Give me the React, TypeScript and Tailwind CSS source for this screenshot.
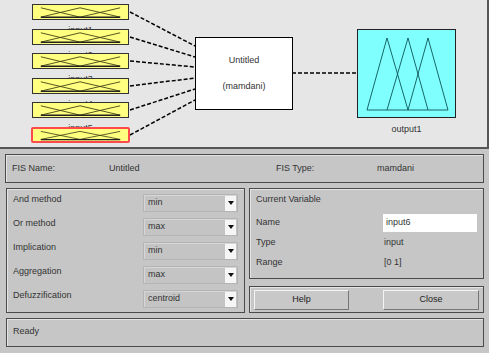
import React from "react";

const inputs = [4, 29, 53, 78, 102, 127];
const lineEnds = [46, 57, 67, 78, 89, 100];

function MfBox({ top, selected, label }: { top: number; selected?: boolean; label: string }) {
  return (
    <>
      {/* label sits under the box, mostly hidden by the next one */}
      <div
        className="absolute left-[32px] w-[97px] text-center text-[9px] leading-none text-[#333]"
        style={{ top: top + 22 }}
      >
        {label}
      </div>
      <div
        className={
          "absolute left-[32px] w-[97px] h-[16px] bg-[#ffff80] " +
          (selected ? "border-2 border-[#ff4a4a] rounded-[2px] -ml-[1px] w-[99px]" : "border border-[#333]")
        }
        style={{ top }}
      >
        <svg viewBox="0 0 97 15" className="w-full h-full" preserveAspectRatio="none">
          <polyline points="8,3 48,13" fill="none" stroke="#3a3a10" strokeWidth="0.9" />
          <polyline points="8,13 48,3 89,13" fill="none" stroke="#3a3a10" strokeWidth="0.9" />
          <polyline points="48,13 89,3" fill="none" stroke="#3a3a10" strokeWidth="0.9" />
          <line x1="8" y1="13.2" x2="89" y2="13.2" stroke="#222" strokeWidth="1.6" />
        </svg>
      </div>
    </>
  );
}

function Dropdown({ value }: { value: string }) {
  return (
    <div className="flex h-[18px] w-[95px] items-center border border-[#b4b4b4] bg-[#c4c4c4] shadow-[inset_1px_1px_0_#d6d6d6]">
      <span className="flex-1 pl-[4px] text-[9px] text-[#333]">{value}</span>
      <div className="mr-[1px] flex h-[15px] w-[11px] items-center justify-center bg-[#f6f6f6]">
        <svg width="6" height="4" viewBox="0 0 6 4">
          <polygon points="0,0 6,0 3,4" fill="#111" />
        </svg>
      </div>
    </div>
  );
}

const panel = "border border-[#4a4a4a] shadow-[inset_1px_1px_0_#e4e4e4] bg-[#c6c6c6]";

export default function App() {
  const rows = [
    ["And method", "min"],
    ["Or method", "max"],
    ["Implication", "min"],
    ["Aggregation", "max"],
    ["Defuzzification", "centroid"],
  ];

  return (
    <div className="w-[489px] h-[353px] bg-[#c6c6c6] font-['Liberation_Sans',Arial,sans-serif] overflow-hidden">
      {/* diagram canvas */}
      <div className="relative h-[149px] w-[489px] overflow-hidden bg-[#e6e6e6] border-b-2 border-r-2 border-[#555]">
        <svg className="absolute inset-0" width="487" height="147">
          {inputs.map((t, i) => (
            <line
              key={i}
              x1="130"
              y1={t + 8}
              x2="195"
              y2={lineEnds[i]}
              stroke="#000"
              strokeWidth="1.5"
              strokeDasharray="4 2"
            />
          ))}
          <line x1="292" y1="73" x2="358" y2="73" stroke="#000" strokeWidth="1.5" strokeDasharray="4 2" />
        </svg>

        {inputs.map((t, i) => (
          <MfBox key={i} top={t} label={`input${i + 1}`} selected={i === 5} />
        ))}

        <div className="absolute left-[195px] top-[37px] flex h-[73px] w-[98px] flex-col items-center justify-center gap-[13px] border border-black bg-white text-[9px] text-[#333]">
          <span>Untitled</span>
          <span>(mamdani)</span>
        </div>

        <div className="absolute left-[357px] top-[29px] h-[89px] w-[99px] border border-[#222] bg-[#80ffff]">
          <svg width="97" height="87" viewBox="0 0 97 87">
            <g fill="none" stroke="#0b5555" strokeWidth="0.9">
              <polyline points="9,80 29,8 50,80" />
              <polyline points="29,80 50,8 70,80" />
              <polyline points="50,80 70,8 90,80" />
              <line x1="9" y1="80" x2="90" y2="80" />
            </g>
          </svg>
        </div>
        <div className="absolute left-[357px] top-[123px] w-[99px] text-center text-[9px] text-[#333]">output1</div>
      </div>

      {/* lower controls */}
      <div className="flex flex-col gap-[5px] px-[5px] pt-[5px]">
        <div className={`${panel} flex h-[29px] w-[479px] items-center text-[9px] text-[#333]`}>
          <span className="w-[103px] pl-[6px]">FIS Name:</span>
          <span className="w-[167px]">Untitled</span>
          <span className="w-[101px]">FIS Type:</span>
          <span>mamdani</span>
        </div>

        <div className="flex gap-[4px]">
          <div className={`${panel} ml-[1px] flex h-[125px] w-[239px] flex-col gap-[6px] px-[6px] pt-[5px]`}>
            {rows.map(([label, value]) => (
              <div key={label} className="flex h-[18px] items-start justify-between">
                <span className="text-[9px] leading-[10px] text-[#333]">{label}</span>
                <Dropdown value={value} />
              </div>
            ))}
          </div>

          <div className="flex w-[235px] flex-col gap-[7px]">
            <div className={`${panel} flex h-[91px] flex-col px-[6px] pt-[4px] text-[9px] text-[#333]`}>
              <div className="h-[20px]">Current Variable</div>
              <div className="flex h-[20px] items-center">
                <span className="w-[127px]">Name</span>
                <div className="flex h-[18px] w-[94px] items-center bg-white pl-[3px]">input6</div>
              </div>
              <div className="flex h-[20px] items-center">
                <span className="w-[128px]">Type</span>
                <span>input</span>
              </div>
              <div className="flex h-[20px] items-center">
                <span className="w-[128px]">Range</span>
                <span>[0 1]</span>
              </div>
            </div>
            <div className={`${panel} flex h-[27px] items-center justify-between px-[4px] text-[9px] text-[#222]`}>
              <button className="h-[20px] w-[95px] border border-[#777] border-t-[#f4f4f4] border-l-[#f4f4f4] bg-[#c8c8c8]">
                Help
              </button>
              <button className="h-[20px] w-[96px] border border-[#777] border-t-[#f4f4f4] border-l-[#f4f4f4] bg-[#c8c8c8]">
                Close
              </button>
            </div>
          </div>
        </div>

        <div className={`${panel} ml-[1px] h-[29px] w-[478px] pl-[6px] pt-[6px] text-[9px] text-[#333]`}>Ready</div>
      </div>
    </div>
  );
}
